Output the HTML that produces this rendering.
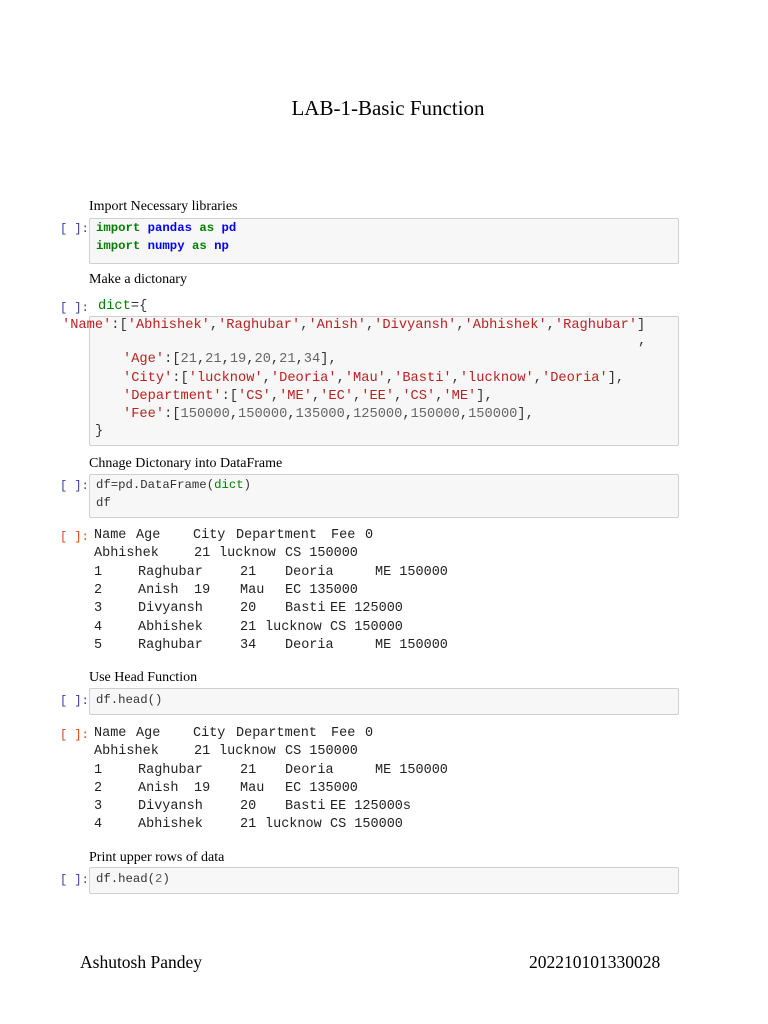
<!DOCTYPE html>
<html><head><meta charset="utf-8"><style>
body{margin:0;width:768px;height:1024px;background:#fff;position:relative;overflow:hidden}
div,span{position:absolute;white-space:pre}
.s{font-family:"Liberation Serif",serif;color:#000}
.h{font-size:14px;left:89px}
.m{font-family:"Liberation Mono",monospace}
.box{background:#f7f7f7;border:1px solid #cfcfcf;border-radius:2px;left:89px;width:588px}
.p{font-family:"Liberation Mono",monospace;font-size:12px;color:#303f9f;left:60px}
.po{font-family:"Liberation Mono",monospace;font-size:12px;color:#d84315;left:60px}
.c{font-size:12.3px;left:96px;color:#333}
.k{color:#008000;font-weight:bold;position:static}
.n{color:#0000ff;font-weight:bold;position:static}
.st{color:#ba2121;position:static}
.nu{color:#666;position:static}
.g{color:#008000;position:static}
.o{font-family:"Liberation Mono",monospace;font-size:13.5px;color:#222}
.d{font-size:13.7px;color:#333}
</style></head><body>
<div class="s" style="left:0;width:776px;text-align:center;top:96px;font-size:21px">LAB-1-Basic Function</div>

<div class="s h" style="top:199px">Import Necessary libraries</div>
<div class="box" style="top:218px;height:44px"></div>
<div class="p" style="top:222px">[ ]:</div>
<div class="m c" style="top:221px"><span class="k">import</span> <span class="n">pandas</span> <span class="k">as</span> <span class="n">pd</span></div>
<div class="m c" style="top:239px"><span class="k">import</span> <span class="n">numpy</span> <span class="k">as</span> <span class="n">np</span></div>

<div class="s h" style="top:272px">Make a dictonary</div>
<div class="box" style="top:316px;height:128px"></div>
<div class="p" style="top:301px">[ ]:</div>
<div class="m d" style="top:299px;left:98px"><span class="g">dict</span>={</div>
<div class="m d" style="top:318px;left:62px"><span class="st">'Name'</span>:[<span class="st">'Abhishek'</span>,<span class="st">'Raghubar'</span>,<span class="st">'Anish'</span>,<span class="st">'Divyansh'</span>,<span class="st">'Abhishek'</span>,<span class="st">'Raghubar'</span>]</div>
<div class="m d" style="top:334px;left:638px">,</div>
<div class="m d" style="top:352px;left:123px"><span class="st">'Age'</span>:[<span class="nu">21</span>,<span class="nu">21</span>,<span class="nu">19</span>,<span class="nu">20</span>,<span class="nu">21</span>,<span class="nu">34</span>],</div>
<div class="m d" style="top:371px;left:123px"><span class="st">'City'</span>:[<span class="st">'lucknow'</span>,<span class="st">'Deoria'</span>,<span class="st">'Mau'</span>,<span class="st">'Basti'</span>,<span class="st">'lucknow'</span>,<span class="st">'Deoria'</span>],</div>
<div class="m d" style="top:389px;left:123px"><span class="st">'Department'</span>:[<span class="st">'CS'</span>,<span class="st">'ME'</span>,<span class="st">'EC'</span>,<span class="st">'EE'</span>,<span class="st">'CS'</span>,<span class="st">'ME'</span>],</div>
<div class="m d" style="top:407px;left:123px"><span class="st">'Fee'</span>:[<span class="nu">150000</span>,<span class="nu">150000</span>,<span class="nu">135000</span>,<span class="nu">125000</span>,<span class="nu">150000</span>,<span class="nu">150000</span>],</div>
<div class="m d" style="top:424px;left:95px">}</div>

<div class="s h" style="top:456px">Chnage Dictonary into DataFrame</div>
<div class="box" style="top:474px;height:42px"></div>
<div class="p" style="top:479px">[ ]:</div>
<div class="m c" style="top:478px">df=pd.DataFrame(<span class="g">dict</span>)</div>
<div class="m c" style="top:496px">df</div>

<div class="po" style="top:530px">[ ]:</div>
<div class="o" style="top:528px;left:94px">Name</div><div class="o" style="top:528px;left:136px">Age</div><div class="o" style="top:528px;left:193px">City</div><div class="o" style="top:528px;left:236px">Department</div><div class="o" style="top:528px;left:331px">Fee</div><div class="o" style="top:528px;left:365px">0</div>
<div class="o" style="top:546px;left:94px">Abhishek</div><div class="o" style="top:546px;left:194px">21</div><div class="o" style="top:546px;left:219px">lucknow</div><div class="o" style="top:546px;left:285px">CS 150000</div>
<div class="o" style="top:565px;left:94px">1</div><div class="o" style="top:565px;left:138px">Raghubar</div><div class="o" style="top:565px;left:240px">21</div><div class="o" style="top:565px;left:285px">Deoria</div><div class="o" style="top:565px;left:375px">ME 150000</div>
<div class="o" style="top:583px;left:94px">2</div><div class="o" style="top:583px;left:138px">Anish</div><div class="o" style="top:583px;left:194px">19</div><div class="o" style="top:583px;left:240px">Mau</div><div class="o" style="top:583px;left:285px">EC 135000</div>
<div class="o" style="top:601px;left:94px">3</div><div class="o" style="top:601px;left:138px">Divyansh</div><div class="o" style="top:601px;left:240px">20</div><div class="o" style="top:601px;left:285px">Basti</div><div class="o" style="top:601px;left:330px">EE 125000</div>
<div class="o" style="top:620px;left:94px">4</div><div class="o" style="top:620px;left:138px">Abhishek</div><div class="o" style="top:620px;left:240px">21</div><div class="o" style="top:620px;left:265px">lucknow</div><div class="o" style="top:620px;left:330px">CS 150000</div>
<div class="o" style="top:638px;left:94px">5</div><div class="o" style="top:638px;left:138px">Raghubar</div><div class="o" style="top:638px;left:240px">34</div><div class="o" style="top:638px;left:285px">Deoria</div><div class="o" style="top:638px;left:375px">ME 150000</div>

<div class="s h" style="top:670px">Use Head Function</div>
<div class="box" style="top:688px;height:25px"></div>
<div class="p" style="top:694px">[ ]:</div>
<div class="m c" style="top:693px">df.head()</div>

<div class="po" style="top:728px">[ ]:</div>
<div class="o" style="top:726px;left:94px">Name</div><div class="o" style="top:726px;left:136px">Age</div><div class="o" style="top:726px;left:193px">City</div><div class="o" style="top:726px;left:236px">Department</div><div class="o" style="top:726px;left:331px">Fee</div><div class="o" style="top:726px;left:365px">0</div>
<div class="o" style="top:744px;left:94px">Abhishek</div><div class="o" style="top:744px;left:194px">21</div><div class="o" style="top:744px;left:219px">lucknow</div><div class="o" style="top:744px;left:285px">CS 150000</div>
<div class="o" style="top:763px;left:94px">1</div><div class="o" style="top:763px;left:138px">Raghubar</div><div class="o" style="top:763px;left:240px">21</div><div class="o" style="top:763px;left:285px">Deoria</div><div class="o" style="top:763px;left:375px">ME 150000</div>
<div class="o" style="top:781px;left:94px">2</div><div class="o" style="top:781px;left:138px">Anish</div><div class="o" style="top:781px;left:194px">19</div><div class="o" style="top:781px;left:240px">Mau</div><div class="o" style="top:781px;left:285px">EC 135000</div>
<div class="o" style="top:799px;left:94px">3</div><div class="o" style="top:799px;left:138px">Divyansh</div><div class="o" style="top:799px;left:240px">20</div><div class="o" style="top:799px;left:285px">Basti</div><div class="o" style="top:799px;left:330px">EE 125000s</div>
<div class="o" style="top:817px;left:94px">4</div><div class="o" style="top:817px;left:138px">Abhishek</div><div class="o" style="top:817px;left:240px">21</div><div class="o" style="top:817px;left:265px">lucknow</div><div class="o" style="top:817px;left:330px">CS 150000</div>

<div class="s h" style="top:850px">Print upper rows of data</div>
<div class="box" style="top:867px;height:25px"></div>
<div class="p" style="top:873px">[ ]:</div>
<div class="m c" style="top:872px">df.head(<span class="nu">2</span>)</div>

<div class="s" style="top:952px;left:80px;font-size:17.5px">Ashutosh Pandey</div>
<div class="s" style="top:952px;left:529px;font-size:17.5px">202210101330028</div>
</body></html>
